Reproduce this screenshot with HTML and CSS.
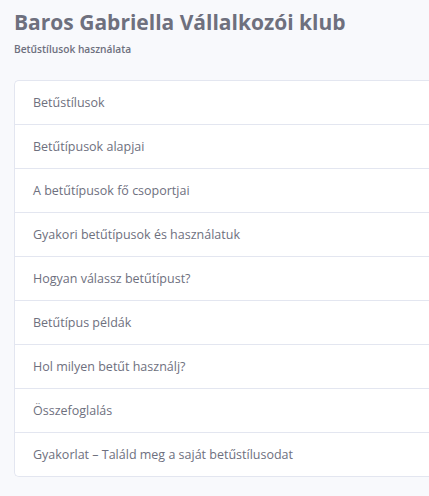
FILE: index.html
```html
<!DOCTYPE html>
<html lang="hu">
<head>
<meta charset="utf-8">
<link rel="stylesheet" href="styles.css">
</head>
<body>
<div class="page">
  <h1 class="title">Baros Gabriella Vállalkozói klub</h1>
  <div class="subtitle">Betűstílusok használata</div>
  <ul class="list">
    <li class="item">Betűstílusok</li>
    <li class="item">Betűtípusok alapjai</li>
    <li class="item">A betűtípusok fő csoportjai</li>
    <li class="item">Gyakori betűtípusok és használatuk</li>
    <li class="item">Hogyan válassz betűtípust?</li>
    <li class="item">Betűtípus példák</li>
    <li class="item">Hol milyen betűt használj?</li>
    <li class="item">Összefoglalás</li>
    <li class="item">Gyakorlat – Találd meg a saját betűstílusodat</li>
  </ul>
</div>
</body>
</html>
```
FILE: styles.css
```css
html, body {
  margin: 0;
  padding: 0;
  background: #f8f9fc;
  overflow: hidden;
}
body {
  font-family: "Open Sans", "Noto Sans", sans-serif;
  color: #6e707e;
}
.page {
  padding: 8px 0 0 14px;
}
.title {
  margin: 0;
  font-size: 21px;
  line-height: 28px;
  font-weight: 700;
  color: #6e707e;
}
.subtitle {
  margin-top: 6px;
  font-size: 10.2px;
  line-height: 14px;
  font-weight: 600;
  color: #6e707e;
}
.list {
  list-style: none;
  margin: 24px 0 0 0;
  padding: 0;
  background: #fff;
  border: 1px solid #e3e6f0;
  border-right: none;
  border-radius: 5px 0 0 5px;
}
.item {
  height: 43px;
  line-height: 43px;
  padding: 0 18px;
  font-size: 12.5px;
  color: #6e707e;
  border-top: 1px solid #e3e6f0;
}
.item:first-child {
  border-top: none;
}
```
